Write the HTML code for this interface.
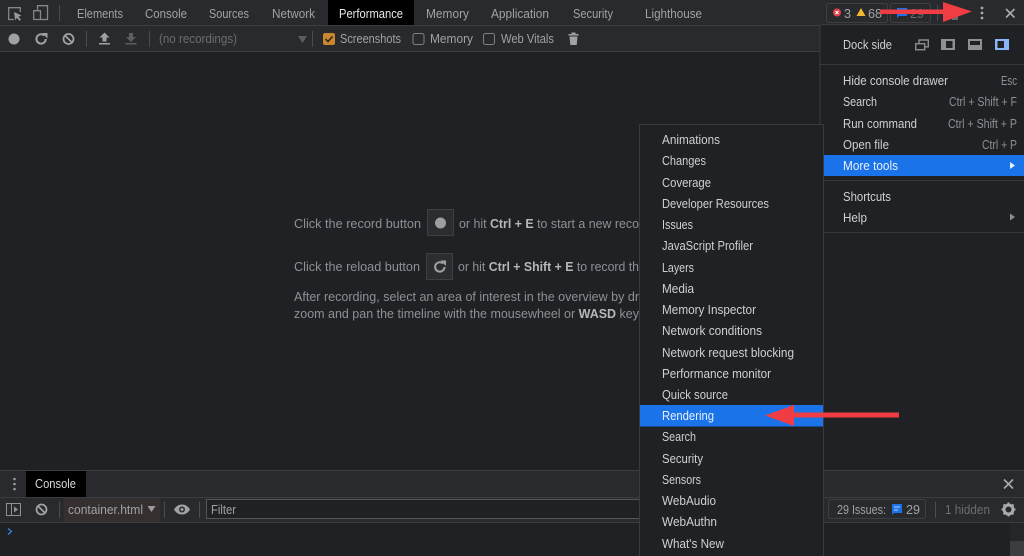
<!DOCTYPE html>
<html><head><meta charset="utf-8"><style>
html,body{margin:0;padding:0;background:#202124;width:1024px;height:556px;overflow:hidden}
svg{display:block;font-family:"Liberation Sans",sans-serif;font-size:12.5px;filter:blur(.35px)}
.t{fill:#a0a2a5}.m{fill:#cfd0d2}.d{fill:#6b6d70}.h{fill:#8d9094}
</style></head><body>
<svg width="1024" height="556" viewBox="0 0 1024 556" xmlns="http://www.w3.org/2000/svg">
<rect width="1024" height="556" fill="#202124"/>
<!-- top bars -->
<rect width="1024" height="25" fill="#292a2d"/>
<rect y="25" width="1024" height="1" fill="#3c3d40"/>
<rect y="26" width="1024" height="25" fill="#292a2d"/>
<rect y="51" width="1024" height="1" fill="#3c3d40"/>
<rect x="328" y="0" width="86" height="25" fill="#000"/>
<g fill="none" stroke="#85868a" stroke-width="1.300">
<path d="M14 19.500H8.700V7.700H20.300V12"/>
<path d="M37.500 10V5.700H47.500V19.500H41M33.700 10.700H40.500V19.500H33.700z"/>
</g>
<path d="M14 12l7.500 3.500-3 1.200 2.500 3-1.500 1.200-2.500-3-1.800 2.200z" fill="#9a9b9e"/>
<rect x="59" y="5" width="1" height="16" fill="#4a4b4e"/>
<g class="t">
<text x="77" y="18" textLength="46" lengthAdjust="spacingAndGlyphs">Elements</text>
<text x="145" y="18" textLength="42" lengthAdjust="spacingAndGlyphs">Console</text>
<text x="209" y="18" textLength="40" lengthAdjust="spacingAndGlyphs">Sources</text>
<text x="272" y="18" textLength="43" lengthAdjust="spacingAndGlyphs">Network</text>
<text x="339" y="18" textLength="64" lengthAdjust="spacingAndGlyphs" style="fill:#e8e8e8">Performance</text>
<text x="426" y="18" textLength="43" lengthAdjust="spacingAndGlyphs">Memory</text>
<text x="491" y="18" textLength="58" lengthAdjust="spacingAndGlyphs">Application</text>
<text x="573" y="18" textLength="40" lengthAdjust="spacingAndGlyphs">Security</text>
<text x="645" y="18" textLength="57" lengthAdjust="spacingAndGlyphs">Lighthouse</text>
</g>
<!-- toolbar -->
<circle cx="14" cy="39" r="5.500" fill="#a0a1a4"/>
<path d="M45.800 39a4.700 4.700 0 1 1-1.500-3.500" fill="none" stroke="#a0a1a4" stroke-width="2"/>
<path d="M42 33h5.500v5.500z" fill="#a0a1a4"/>
<circle cx="68.500" cy="39" r="5" fill="none" stroke="#a0a1a4" stroke-width="1.800"/>
<path d="M65 35.500l7 7" stroke="#a0a1a4" stroke-width="1.800"/>
<rect x="86" y="31" width="1" height="16" fill="#4a4b4e"/>
<path d="M104.500 32.500l5 5h-3v4h-4v-4h-3zM99 43h11v1.500H99z" fill="#a0a1a4"/>
<path d="M129 33h4v4h3l-5 5-5-5h3zM125.500 43h11v1.500h-11z" fill="#5c5d60"/>
<rect x="149" y="31" width="1" height="16" fill="#4a4b4e"/>
<text x="159" y="43" textLength="78" lengthAdjust="spacingAndGlyphs" class="d">(no recordings)</text>
<path d="M298 36h9l-4.500 7z" fill="#5c5d60"/>
<rect x="312" y="31" width="1" height="16" fill="#4a4b4e"/>
<rect x="323" y="33" width="12" height="12" rx="2" fill="#c8862e"/>
<path d="M325.500 39l2.500 2.500 4.500-5" fill="none" stroke="#2a2118" stroke-width="1.500"/>
<text x="340" y="43" textLength="61" lengthAdjust="spacingAndGlyphs" class="t">Screenshots</text>
<rect x="413" y="33.500" width="11" height="11" rx="2" fill="none" stroke="#808184"/>
<text x="430" y="43" textLength="43" lengthAdjust="spacingAndGlyphs" class="t">Memory</text>
<rect x="483.500" y="33.500" width="11" height="11" rx="2" fill="none" stroke="#808184"/>
<text x="501" y="43" textLength="53" lengthAdjust="spacingAndGlyphs" class="t">Web Vitals</text>
<path d="M568.500 34h10v1.500h-10zM571.500 32.500h4V34h-4zM569.500 36.500h8l-.8 8.500h-6.400z" fill="#a0a1a4"/>
<!-- top right -->
<rect x="826.500" y="3.500" width="61" height="19" rx="2" fill="none" stroke="#3e3f42"/>
<rect x="890.500" y="3.500" width="40" height="19" rx="2" fill="none" stroke="#3e3f42"/>
<circle cx="837" cy="12.500" r="4" fill="#e0424a"/>
<path d="M835.500 11l3 3M838.500 11l-3 3" stroke="#fff" stroke-width="1"/>
<text x="844" y="18" class="t" textLength="7" lengthAdjust="spacingAndGlyphs">3</text>
<path d="M861 8l4.500 8h-9z" fill="#f2b82e"/>
<text x="868" y="18" class="t" textLength="14" lengthAdjust="spacingAndGlyphs">68</text>
<path d="M897 8h10v8h-8l-2 2z" fill="#1a73e8"/>
<text x="910" y="18" class="d" textLength="14" lengthAdjust="spacingAndGlyphs">29</text>
<rect x="937" y="5" width="1" height="16" fill="#4a4b4e"/>
<path d="M952 15h6v5h-6z" fill="#6a6b6e"/>
<circle cx="982" cy="8" r="1.400" fill="#a9aaad"/><circle cx="982" cy="13" r="1.400" fill="#a9aaad"/><circle cx="982" cy="18" r="1.400" fill="#a9aaad"/>
<path d="M1006 9l8.500 8.500M1014.500 9l-8.500 8.500" stroke="#a9aaad" stroke-width="1.600"/>
<!-- center hints -->
<g class="h">
<text x="294" y="228" textLength="127" lengthAdjust="spacingAndGlyphs">Click the record button</text>
<text x="459" y="228" textLength="180" lengthAdjust="spacingAndGlyphs">or hit <tspan font-weight="bold" fill="#b5b7ba">Ctrl + E</tspan> to start a new reco</text>
<text x="294" y="271" textLength="126" lengthAdjust="spacingAndGlyphs">Click the reload button</text>
<text x="458" y="271" textLength="181" lengthAdjust="spacingAndGlyphs">or hit <tspan font-weight="bold" fill="#b5b7ba">Ctrl + Shift + E</tspan> to record th</text>
<text x="294" y="301" textLength="345" lengthAdjust="spacingAndGlyphs">After recording, select an area of interest in the overview by dr</text>
<text x="294" y="318" textLength="345" lengthAdjust="spacingAndGlyphs">zoom and pan the timeline with the mousewheel or <tspan font-weight="bold" fill="#b5b7ba">WASD</tspan> key</text>
</g>
<rect x="427.500" y="209.500" width="26" height="26" fill="#2c2d30" stroke="#3e3f42"/>
<circle cx="440.500" cy="223" r="5.500" fill="#9d9ea1"/>
<rect x="426.500" y="253.500" width="26" height="26" fill="#2c2d30" stroke="#3e3f42"/>
<path d="M444.500 267a4.700 4.700 0 1 1-1.500-3.500" fill="none" stroke="#a0a1a4" stroke-width="2"/>
<path d="M440.500 260.500h5.500v5.500z" fill="#a0a1a4"/>
<!-- drawer -->
<rect y="470" width="1024" height="1" fill="#3c3d40"/>
<rect y="471" width="1024" height="26" fill="#292a2d"/>
<rect y="497" width="1024" height="1" fill="#3c3d40"/>
<rect y="498" width="1024" height="24" fill="#292a2d"/>
<rect y="522" width="1024" height="1" fill="#3c3d40"/>
<rect x="26" y="471" width="60" height="26" fill="#000"/>
<text x="35" y="488" textLength="41" lengthAdjust="spacingAndGlyphs" fill="#d6d7d9">Console</text>
<circle cx="14.500" cy="479" r="1.300" fill="#9a9b9e"/><circle cx="14.500" cy="484" r="1.300" fill="#9a9b9e"/><circle cx="14.500" cy="489" r="1.300" fill="#9a9b9e"/>
<path d="M1004 479.500l9 9M1013 479.500l-9 9" stroke="#a9aaad" stroke-width="1.600"/>
<rect x="6.500" y="503.500" width="14" height="12" fill="none" stroke="#8f9093"/>
<path d="M11.500 503.500v12" stroke="#8f9093"/><path d="M14 506.500l4 3-4 3z" fill="#8f9093"/>
<circle cx="41.500" cy="509.500" r="5" fill="none" stroke="#a0a1a4" stroke-width="1.800"/>
<path d="M38 506l7 7" stroke="#a0a1a4" stroke-width="1.800"/>
<rect x="59" y="502" width="1" height="16" fill="#4a4b4e"/>
<rect x="64" y="498" width="96" height="24" fill="#35302f"/>
<text x="68" y="514" textLength="75" lengthAdjust="spacingAndGlyphs" class="t">container.html</text>
<path d="M147.500 506h8l-4 6z" fill="#9a9b9e"/>
<rect x="164" y="502" width="1" height="16" fill="#4a4b4e"/>
<path d="M174 509.500c2-3.500 5-5 8-5s6 1.500 8 5c-2 3.500-5 5-8 5s-6-1.500-8-5z" fill="#a0a1a4"/>
<circle cx="182" cy="509.500" r="3" fill="#292a2d"/><circle cx="182" cy="509.500" r="1.500" fill="#a0a1a4"/>
<rect x="199" y="502" width="1" height="16" fill="#4a4b4e"/>
<rect x="206.500" y="499.500" width="440" height="19" fill="#202124" stroke="#55565a"/>
<text x="211" y="514" textLength="25" lengthAdjust="spacingAndGlyphs" class="t">Filter</text>
<rect x="828.500" y="499.500" width="97" height="19" rx="2" fill="none" stroke="#3e3f42"/>
<text x="837" y="514" textLength="49" lengthAdjust="spacingAndGlyphs" class="t">29 Issues:</text>
<path d="M892 504h10v9h-8l-2 2z" fill="#1a73e8"/><path d="M894 507h6M894 510h4" stroke="#bcd4f5"/>
<text x="906" y="514" textLength="14" lengthAdjust="spacingAndGlyphs" class="t">29</text>
<rect x="935" y="502" width="1" height="16" fill="#4a4b4e"/>
<text x="945" y="514" textLength="45" lengthAdjust="spacingAndGlyphs" class="d">1 hidden</text>
<circle cx="1008.500" cy="509.500" r="4.500" fill="none" stroke="#a9aaad" stroke-width="3"/>
<path d="M1008.500 502.500v14M1001.500 509.500h14M1003.500 504.500l10 10M1013.500 504.500l-10 10" stroke="#a9aaad" stroke-width="2" stroke-dasharray="2 10"/>
<path d="M8 528.500l3.500 3-3.500 3" fill="none" stroke="#3b7fe0" stroke-width="1.300"/>
<rect x="1010" y="523" width="14" height="33" fill="#252629"/>
<rect x="1010" y="541" width="14" height="15" fill="#3c3d40"/>
<!-- main menu -->
<rect x="820" y="24.500" width="204" height="208" fill="#202124"/>
<path d="M820 232V27q0-2.500 3-2.500h201" fill="none" stroke="#3a3b3e"/>
<path d="M820 232.500h204" stroke="#38393c"/>
<text x="843" y="49" textLength="49" lengthAdjust="spacingAndGlyphs" class="m">Dock side</text>
<g fill="none" stroke="#8b8c8f" stroke-width="1.400">
<rect x="915.700" y="43.700" width="9" height="6"/><path d="M919 43.500V40H928.300V46.800H925"/>
</g>
<rect x="941" y="39" width="14" height="11" fill="#8f9093"/><rect x="946" y="41" width="6.500" height="7" fill="#202124"/>
<rect x="968" y="39" width="14" height="11" fill="#8f9093"/><rect x="970" y="41" width="10" height="4" fill="#202124"/>
<rect x="995" y="39" width="14" height="11" fill="#8ab4f8"/><rect x="997.500" y="41" width="6.500" height="7" fill="#202124"/>
<path d="M820 64.500h204M820 180.500h204" stroke="#38393c"/>
<g class="m">
<text x="843" y="85" textLength="105" lengthAdjust="spacingAndGlyphs">Hide console drawer</text>
<text x="843" y="106" textLength="34" lengthAdjust="spacingAndGlyphs">Search</text>
<text x="843" y="128" textLength="74" lengthAdjust="spacingAndGlyphs">Run command</text>
<text x="843" y="149" textLength="46" lengthAdjust="spacingAndGlyphs">Open file</text>
<text x="843" y="201" textLength="48" lengthAdjust="spacingAndGlyphs">Shortcuts</text>
<text x="843" y="222" textLength="24" lengthAdjust="spacingAndGlyphs">Help</text>
</g>
<g class="h">
<text x="1001" y="85" textLength="16" lengthAdjust="spacingAndGlyphs">Esc</text>
<text x="949" y="106" textLength="68" lengthAdjust="spacingAndGlyphs">Ctrl + Shift + F</text>
<text x="948" y="128" textLength="69" lengthAdjust="spacingAndGlyphs">Ctrl + Shift + P</text>
<text x="982" y="149" textLength="35" lengthAdjust="spacingAndGlyphs">Ctrl + P</text>
</g>
<rect x="824" y="155" width="200" height="21" fill="#1a73e8"/>
<text x="843" y="170" textLength="55" lengthAdjust="spacingAndGlyphs" fill="#e8f0fe">More tools</text>
<path d="M1010 162l5 3.500-5 3.500z" fill="#e8f0fe"/>
<path d="M1010 213.500l5 3.500-5 3.500z" fill="#8d8f92"/>
<!-- submenu -->
<rect x="639.500" y="124.500" width="184" height="440" fill="#202124" stroke="#3a3b3e"/>
<rect x="640" y="405" width="183" height="21.500" fill="#1a73e8"/>
<g class="m">
<text x="662" y="144" textLength="58" lengthAdjust="spacingAndGlyphs">Animations</text>
<text x="662" y="165" textLength="44" lengthAdjust="spacingAndGlyphs">Changes</text>
<text x="662" y="187" textLength="49" lengthAdjust="spacingAndGlyphs">Coverage</text>
<text x="662" y="208" textLength="107" lengthAdjust="spacingAndGlyphs">Developer Resources</text>
<text x="662" y="229" textLength="31" lengthAdjust="spacingAndGlyphs">Issues</text>
<text x="662" y="250" textLength="91" lengthAdjust="spacingAndGlyphs">JavaScript Profiler</text>
<text x="662" y="272" textLength="32" lengthAdjust="spacingAndGlyphs">Layers</text>
<text x="662" y="293" textLength="32" lengthAdjust="spacingAndGlyphs">Media</text>
<text x="662" y="314" textLength="94" lengthAdjust="spacingAndGlyphs">Memory Inspector</text>
<text x="662" y="335" textLength="100" lengthAdjust="spacingAndGlyphs">Network conditions</text>
<text x="662" y="357" textLength="132" lengthAdjust="spacingAndGlyphs">Network request blocking</text>
<text x="662" y="378" textLength="109" lengthAdjust="spacingAndGlyphs">Performance monitor</text>
<text x="662" y="399" textLength="66" lengthAdjust="spacingAndGlyphs">Quick source</text>
<text x="662" y="420" textLength="52" lengthAdjust="spacingAndGlyphs" style="fill:#e8f0fe">Rendering</text>
<text x="662" y="441" textLength="34" lengthAdjust="spacingAndGlyphs">Search</text>
<text x="662" y="463" textLength="41" lengthAdjust="spacingAndGlyphs">Security</text>
<text x="662" y="484" textLength="39" lengthAdjust="spacingAndGlyphs">Sensors</text>
<text x="662" y="505" textLength="54" lengthAdjust="spacingAndGlyphs">WebAudio</text>
<text x="662" y="526" textLength="55" lengthAdjust="spacingAndGlyphs">WebAuthn</text>
<text x="662" y="548" textLength="62" lengthAdjust="spacingAndGlyphs">What's New</text>
</g>
<!-- red arrows -->
<path d="M880 9.500H943V2L972 11.500 943 22V14H880z" fill="#ef3d43"/>
<path d="M899 412.500H794V405L765 415.500 794 426V417.500H899z" fill="#ef3d43"/>
</svg>
</body></html>
